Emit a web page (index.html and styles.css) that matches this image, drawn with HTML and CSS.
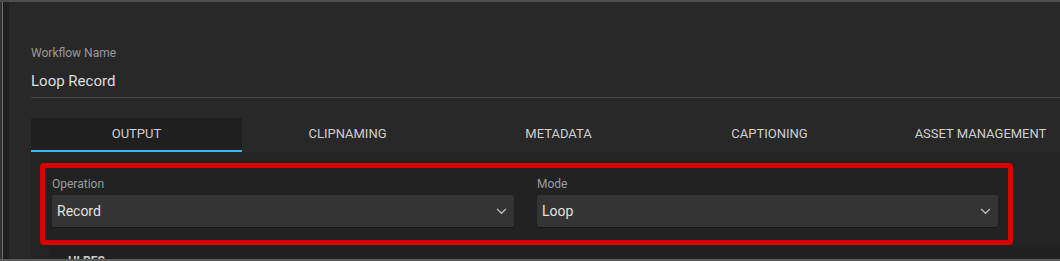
FILE: index.html
```html
<!DOCTYPE html>
<html>
<head>
<meta charset="utf-8">
<link rel="stylesheet" href="styles.css">
</head>
<body>
<div class="screen">
  <div class="edge"></div>
  <div class="panel">
    <div class="name-field">
      <div class="label">Workflow Name</div>
      <div class="value">Loop Record</div>
    </div>
    <div class="tabs">
      <div class="tab active">OUTPUT</div>
      <div class="tab">CLIPNAMING</div>
      <div class="tab">METADATA</div>
      <div class="tab">CAPTIONING</div>
      <div class="tab">ASSET MANAGEMENT</div>
    </div>
    <div class="content">
      <div class="highlight">
        <div class="field">
          <div class="flabel">Operation</div>
          <div class="select"><span>Record</span>
            <svg class="chev" viewBox="0 0 12 8" width="11" height="7"><path d="M1 1.2 L6 6 L11 1.2" fill="none" stroke="#bbb" stroke-width="1.5"/></svg>
          </div>
        </div>
        <div class="field">
          <div class="flabel">Mode</div>
          <div class="select"><span>Loop</span>
            <svg class="chev" viewBox="0 0 12 8" width="11" height="7"><path d="M1 1.2 L6 6 L11 1.2" fill="none" stroke="#bbb" stroke-width="1.5"/></svg>
          </div>
        </div>
      </div>
      <div class="card">
        <div class="card-title">HLRES</div>
      </div>
    </div>
  </div>
</div>
</body>
</html>
```
FILE: styles.css
```css
html, body {
  margin: 0;
  padding: 0;
  background: #282828;
}
.screen {
  width: 1060px;
  height: 261px;
  box-sizing: border-box;
  overflow: hidden;
  display: flex;
  border-top: 2px solid #4d4d4d;
  border-bottom: 2px solid #5a5a5a;
  font-family: Roboto, "Liberation Sans", sans-serif;
  background: #282828;
}
.edge {
  flex: 0 0 9px;
  box-sizing: border-box;
  border-left: 2px solid #333;
  background: #1f1f1f;
  box-shadow: inset 1px 0 0 #6a6a6a;
}
.panel {
  flex: 1;
  min-width: 0;
  padding: 44px 0 0 22px;
  background: #282828;
}
.name-field {
  border-bottom: 1px solid #464646;
  padding-bottom: 7px;
}
.label {
  font-size: 12px;
  line-height: 14px;
  color: #9a9a9a;
}
.value {
  margin-top: 12px;
  font-size: 15px;
  line-height: 18px;
  color: #dedede;
}
.tabs {
  display: flex;
  margin-top: 20px;
  width: 1060px;
}
.tab {
  flex: 0 0 211px;
  height: 32px;
  line-height: 32px;
  text-align: center;
  font-size: 13px;
  color: #cfcfcf;
  border-bottom: 2px solid transparent;
}
.tab.active {
  background: #1f1f1f;
  border-bottom-color: #3fb6f2;
}
.content {
  background: #232323;
  padding: 11px 0 0 9px;
  height: 120px;
}
.highlight {
  width: 973px;
  box-sizing: border-box;
  border: 5px solid #d90000;
  border-radius: 4px;
  padding: 9px 10px 13px 7px;
  display: grid;
  grid-template-columns: 462px 461px;
  column-gap: 23px;
  background: #222;
}
.flabel {
  font-size: 12px;
  line-height: 14px;
  color: #9c9c9c;
  margin-bottom: 4px;
}
.select {
  height: 32px;
  background: #343434;
  border-radius: 2px;
  display: flex;
  align-items: center;
  justify-content: space-between;
  padding: 0 7px 0 5px;
  font-size: 14px;
  color: #e0e0e0;
  box-shadow: 0 1px 1px rgba(0,0,0,0.3);
}
.chev {
  display: block;
}
.card {
  margin-left: 9px;
  background: #202020;
  height: 40px;
  padding: 9px 0 0 19px;
}
.card-title {
  font-size: 12px;
  font-weight: bold;
  color: #cccccc;
}
```
